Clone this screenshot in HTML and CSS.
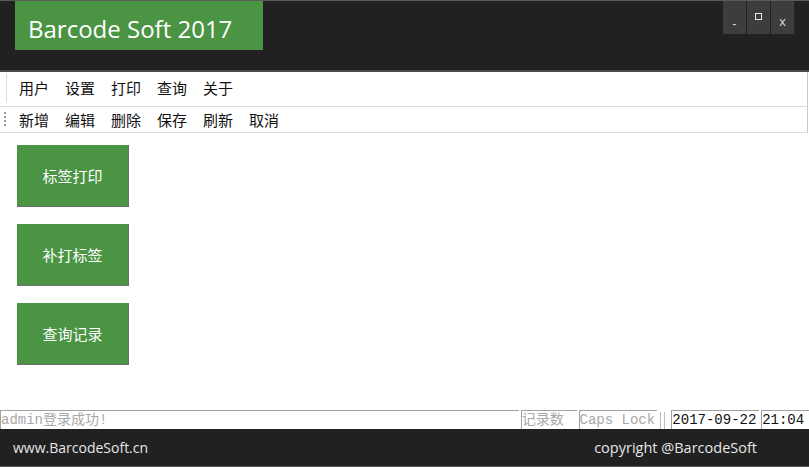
FILE: index.html
```html
<!DOCTYPE html>
<html>
<head>
    <title>Barcode Soft 2017</title>
    <link rel="stylesheet" href="styles.css">
</head>
<body>
    <div class="window">
        <div class="header">
            <div class="title">Barcode Soft 2017</div>
            <div class="controls">
                <div class="ctl ctl-min">-</div>
                <div class="ctl ctl-max"><span class="box"></span></div>
                <div class="ctl">x</div>
            </div>
        </div>
        <div class="menubar">
            <span class="menu-edge"></span>
            <span>用户</span><span>设置</span><span>打印</span><span>查询</span><span>关于</span>
        </div>
        <div class="toolbar">
            <span class="grip"></span>
            <span>新增</span><span>编辑</span><span>删除</span><span>保存</span><span>刷新</span><span>取消</span>
        </div>
        <div class="main">
            <div class="btn">标签打印</div>
            <div class="btn">补打标签</div>
            <div class="btn">查询记录</div>
        </div>
        <div class="statusbar">
            <div class="panel panel-msg">admin登录成功!</div>
            <div class="panel panel-count">记录数</div>
            <div class="panel panel-caps">Caps Lock</div>
            <div class="sep"></div>
            <div class="panel panel-date">2017-09-22</div>
            <div class="panel panel-time">21:04</div>
        </div>
        <div class="footer">
            <span>www.BarcodeSoft.cn</span>
            <span class="copy">copyright @BarcodeSoft</span>
        </div>
    </div>
</body>
</html>
```

FILE: styles.css
```css
body {
    margin: 0;
    font-family: "Open Sans", "Noto Sans CJK SC", sans-serif;
    background: #fff;
}
.window {
    width: 809px;
    height: 467px;
    display: flex;
    flex-direction: column;
    overflow: hidden;
}
.header {
    height: 69px;
    background: #212121;
    border-top: 1px solid #5a5a5a;
    border-bottom: 2px solid #4c4c4c;
    display: flex;
    justify-content: space-between;
    align-items: flex-start;
    flex-shrink: 0;
}
.title {
    margin-left: 15px;
    width: 235px;
    height: 49px;
    padding-left: 13px;
    background: #4a9444;
    color: #fff;
    font-size: 24px;
    line-height: 56px;
    box-sizing: content-box;
}
.controls {
    display: flex;
    gap: 1px;
    margin-right: 15px;
}
.ctl {
    width: 23px;
    height: 33px;
    background: #3d3d3d;
    color: #d8d8d8;
    font-family: "Liberation Sans", sans-serif;
    font-size: 13px;
    line-height: 42px;
    text-align: center;
}
.ctl-min {
    line-height: 45px;
}
.ctl-max {
    display: flex;
    justify-content: center;
    padding-top: 12px;
    box-sizing: border-box;
}
.box {
    width: 5px;
    height: 5px;
    border: 1px solid #e8e8e8;
}
.menubar, .toolbar {
    display: flex;
    align-items: center;
    gap: 16px;
    padding-left: 19px;
    position: relative;
    border-right: 1px solid #c8c8c8;
    margin-right: 1px;
    font-size: 15px;
    color: #111;
    flex-shrink: 0;
}
.menubar {
    height: 31px;
    padding-bottom: 3px;
    border-bottom: 1px solid #dcdcdc;
}
.toolbar {
    height: 25px;
    border-bottom: 1px solid #dcdcdc;
}
.menu-edge {
    position: absolute;
    left: 6px;
    top: 2px;
    bottom: 3px;
    border-left: 1px solid #dadada;
}
.grip {
    position: absolute;
    left: 4px;
    top: 5px;
    width: 2px;
    height: 15px;
    background: repeating-linear-gradient(#999 0 2px, transparent 2px 4px);
}
.main {
    flex: 1;
    padding: 12px 0 0 17px;
    display: flex;
    flex-direction: column;
    gap: 17px;
}
.btn {
    width: 111px;
    height: 61px;
    background: #4a9444;
    border-right: 1px solid #6e6e6e;
    border-bottom: 1px solid #6e6e6e;
    color: #fff;
    font-size: 15px;
    display: flex;
    align-items: center;
    justify-content: center;
}
.statusbar {
    height: 19px;
    display: flex;
    gap: 2px;
    font-family: "Liberation Mono", "Noto Sans CJK SC", monospace;
    font-size: 14px;
    color: #a8a8a8;
    flex-shrink: 0;
}
.panel {
    border-top: 1px solid #a0a0a0;
    border-left: 1px solid #a0a0a0;
    line-height: 18px;
    white-space: nowrap;
    overflow: hidden;
}
.panel-msg { width: 519px; }
.panel-count { width: 55px; }
.panel-caps { width: 78px; }
.sep {
    width: 3px;
    margin: 2px 4px 0 1px;
    border-left: 1px solid #c0c0c0;
    border-right: 1px solid #c0c0c0;
}
.panel-date {
    width: 87px;
    color: #111;
}
.panel-time {
    width: 47px;
    color: #111;
}
.footer {
    height: 37px;
    background: #212121;
    border-bottom: 1px solid #5a5a5a;
    color: #e6e6e6;
    font-size: 14px;
    display: flex;
    align-items: center;
    justify-content: space-between;
    padding: 0 52px 0 13px;
    flex-shrink: 0;
}
.copy {
    font-size: 14.5px;
}
```
